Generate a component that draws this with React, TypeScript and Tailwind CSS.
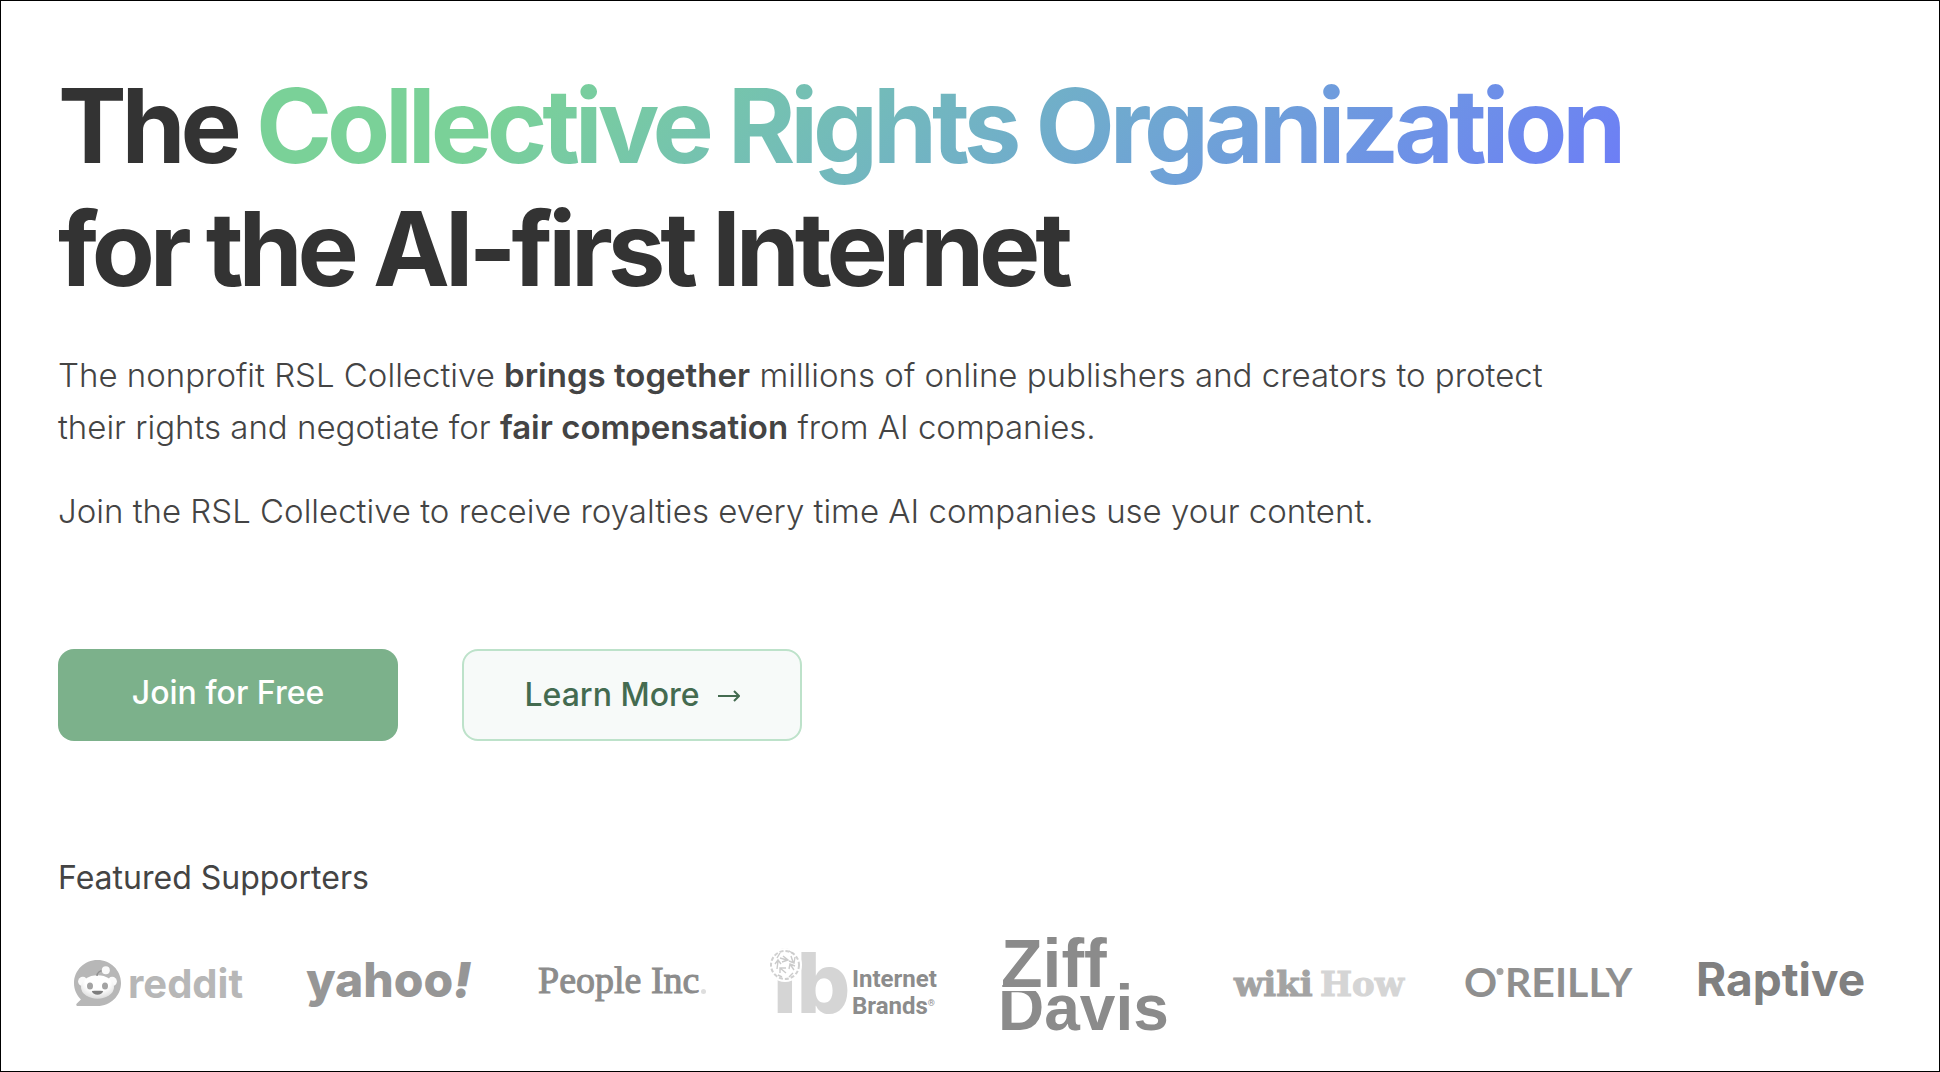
import { type FC, type ReactNode } from "react";

interface LogoProps {
    label: string;
    children: ReactNode;
}

const Logo: FC<LogoProps> = ({ label, children }: LogoProps) => (
    <li className="min-w-0 flex-1">
        <svg viewBox="0 0 168 98" role="img" aria-label={label} className="block w-full overflow-visible">
            {children}
        </svg>
    </li>
);

const RedditLogo: FC = () => (
    <Logo label="reddit">
        <defs>
            <radialGradient id="snoo-face" cx="0.5" cy="0.3" r="0.75">
                <stop offset="0.5" stopColor="#ffffff" />
                <stop offset="1" stopColor="#d6d6d6" />
            </radialGradient>
        </defs>
        <path
            d="M23.5 26C10.5 26 0 36.3 0 49c0 6.5 2.6 12.2 6.900 16.400L2.600 69.800c-.8.800-.2 2.200.9 2.200h20C36.5 72 47 61.700 47 49S36.500 26 23.500 26Z"
            fill="#b7b7b7"
        />
        <circle cx="8.8" cy="47.5" r="4.7" fill="#fafafa" />
        <circle cx="38.2" cy="47.5" r="4.7" fill="#fafafa" />
        <ellipse cx="23.5" cy="53" rx="16.5" ry="11.8" fill="url(#snoo-face)" />
        <path d="M23 42c0-3.5 3-5.5 6-5.5" fill="none" stroke="#8f8f8f" strokeWidth="1.4" />
        <circle cx="31.8" cy="36.3" r="4" fill="#fafafa" />
        <ellipse cx="16" cy="52" rx="3" ry="3.5" fill="#a3a3a3" />
        <ellipse cx="31" cy="52" rx="3" ry="3.5" fill="#a3a3a3" />
        <path d="M17.8 57c3.8-.5 7.6-.5 11.4 0-.8 2.5-3 3.8-5.7 3.8s-4.9-1.3-5.7-3.8Z" fill="#7d7d7d" />
        <text x="54" y="64" className="fill-[#b7b7b7] font-['Inter',sans-serif] text-[40px] font-bold">
            reddit
        </text>
    </Logo>
);

const YahooLogo: FC = () => (
    <Logo label="yahoo!">
        <text x="0" y="63" className="fill-[#969696] font-['Inter',sans-serif] text-[48px] font-extrabold">
            yahoo
            <tspan className="font-black italic">!</tspan>
        </text>
    </Logo>
);

const PeopleLogo: FC = () => (
    <Logo label="People Inc.">
        <text
            x="0"
            y="59"
            className="fill-[#8c8c8c] stroke-[#8c8c8c] stroke-1 font-['Liberation_Serif',serif] text-[38px]"
        >
            People Inc
        </text>
        <circle cx="165.5" cy="57.5" r="2.5" fill="#dedede" />
    </Logo>
);

const InternetBrandsLogo: FC = () => (
    <Logo label="Internet Brands">
        <text x="3" y="79" className="fill-[#d5d5d5] font-['Inter',sans-serif] text-[84px] font-extrabold">
            ib
        </text>
        <circle cx="15" cy="31" r="17" fill="#ffffff" />
        <circle cx="15" cy="31" r="14" fill="none" stroke="#d0d0d0" strokeWidth="2" strokeDasharray="4 2" />
        <g fill="none" stroke="#cbcbcb" strokeWidth="1.4">
            <path d="M10 24l7 2M13 22l5 4-6 2M21 22l2 6M19 27l5 2 1-6M7 35l1-8M5 30l3-4 3 4M16 39l-6-5M10 39v-5h6M24 36l-4-6M19 35l1-5 5 2M10 19l-3 5M19 17l5 3M8 41l4 2M19 43l4-4" />
        </g>
        <text x="82" y="53" className="fill-[#8c8c8c] font-['Roboto',sans-serif] text-[24px] font-bold">
            Internet
        </text>
        <text x="82" y="80" className="fill-[#8c8c8c] font-['Roboto',sans-serif] text-[24px] font-bold">
            Brands
            <tspan dy="-8" className="text-[9px] font-normal">
                ®
            </tspan>
        </text>
    </Logo>
);

const ZiffDavisLogo: FC = () => (
    <Logo label="Ziff Davis">
        <text x="-1" y="53" className="fill-[#8b8b8b] font-['Liberation_Sans',sans-serif] text-[68px] font-bold">
            Ziff
        </text>
        <text x="-4" y="96" className="fill-[#8b8b8b] font-['Liberation_Sans',sans-serif] text-[64px] font-bold">
            Davis
        </text>
        {/* gap that cuts the Z from the D */}
        <rect x="-1" y="53" width="46" height="4" fill="#ffffff" />
    </Logo>
);

const WikiHowLogo: FC = () => (
    <Logo label="wikiHow">
        <text
            x="0"
            y="62"
            className="fill-[#a3a3a3] stroke-[#a3a3a3] stroke-1 font-['DejaVu_Serif',serif] text-[34px] font-bold"
        >
            wiki
        </text>
        <text
            x="86"
            y="62"
            className="fill-[#d5d5d5] stroke-[#d5d5d5] stroke-1 font-['DejaVu_Serif',serif] text-[34px] font-bold"
        >
            How
        </text>
    </Logo>
);

const OReillyLogo: FC = () => (
    <Logo label="O'Reilly">
        <text x="-2" y="63" className="fill-[#8f8f8f] font-['Lato',sans-serif] text-[41px] font-bold">
            O
        </text>
        <circle cx="34" cy="37.5" r="3.5" fill="#a3a3a3" />
        <text x="39" y="63" className="fill-[#8f8f8f] font-['Lato',sans-serif] text-[41px] font-bold">
            REILLY
        </text>
    </Logo>
);

const RaptiveLogo: FC = () => (
    <Logo label="Raptive">
        <text x="-2" y="62" className="fill-[#808080] font-['Inter',sans-serif] text-[46px] font-bold">
            Raptive
        </text>
    </Logo>
);

export default function App() {
    return (
        <main className="min-h-screen border border-black bg-white px-[57px] pt-[63px] pb-8 font-['Inter',sans-serif] text-[#444444]">
            <h1 className="text-[103px] leading-[123px] font-bold tracking-tighter text-[#333333]">
                The{" "}
                <span className="bg-linear-135 from-[#7ad198] from-20% to-[#6d7cf7] bg-clip-text text-transparent">
                    Collective Rights Organization
                </span>
                <br />
                for the AI-first Internet
            </h1>

            <div className="mt-[39px] flex max-w-[1540px] flex-col gap-8 text-[33px] leading-[52px] font-light">
                <p>
                    The nonprofit RSL Collective <strong className="font-semibold">brings together</strong> millions of
                    online publishers and creators to protect their rights and negotiate for{" "}
                    <strong className="font-semibold">fair compensation</strong> from AI companies.
                </p>
                <p>Join the RSL Collective to receive royalties every time AI companies use your content.</p>
            </div>

            <div className="mt-28 flex gap-16 text-[32px] font-medium">
                <button type="button" className="h-[92px] w-[340px] rounded-2xl bg-[#7cb18b] pb-1 text-white">
                    Join for Free
                </button>
                <button
                    type="button"
                    className="flex h-[92px] w-[340px] items-center justify-center gap-[18px] rounded-2xl border-2 border-[#bde2ca] bg-[#f7faf9] text-[#446b50]"
                >
                    Learn More
                    <svg viewBox="0 0 22 20" fill="none" stroke="currentColor" strokeWidth="2" className="h-5 w-[22px]" aria-hidden="true">
                        <path d="M0 11h21M16 6l5 5-5 5" />
                    </svg>
                </button>
            </div>

            <section className="mt-[113px]">
                <h2 className="text-[32px] leading-[48px]">Featured Supporters</h2>
                <ul className="mt-8 flex items-center gap-16 px-4">
                    <RedditLogo />
                    <YahooLogo />
                    <PeopleLogo />
                    <InternetBrandsLogo />
                    <ZiffDavisLogo />
                    <WikiHowLogo />
                    <OReillyLogo />
                    <RaptiveLogo />
                </ul>
            </section>
        </main>
    );
}
